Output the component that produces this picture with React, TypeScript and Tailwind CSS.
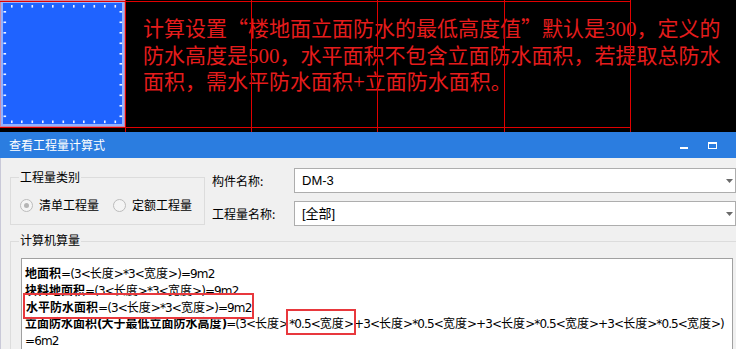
import type { FC, ReactNode } from 'react';

const tickXs = [11, 21, 31.5, 42, 52, 62.5, 73, 83, 93.5, 104, 114.5];
const tickYs = [11, 21.5, 32, 42.5, 53, 63, 73.5, 84, 94.5, 105, 115.5];

const CadBlock: FC = () => (
  <svg width="126" height="128" viewBox="0 0 126 128" className="shrink-0">
    <rect x="0" y="0" width="126" height="128" fill="#c98aa8" />
    <rect x="1" y="1" width="123" height="125" fill="#93b2ff" />
    <rect x="3" y="3" width="119" height="121" fill="#1f63ff" />
    {tickXs.map((x) => (
      <g key={`h${x}`} fill="#f2f5ff">
        <rect x={x} y="5" width="1.6" height="2.6" />
        <rect x={x} y="120.5" width="1.6" height="2.6" />
      </g>
    ))}
    {tickYs.map((y) => (
      <g key={`v${y}`} fill="#f2f5ff">
        <rect x="3.5" y={y} width="2.6" height="1.6" />
        <rect x="119.5" y={y} width="2.6" height="1.6" />
      </g>
    ))}
  </svg>
);

const GridLines: FC = () => (
  <svg width="736" height="132" className="pointer-events-none absolute inset-0">
    <g stroke="#e00000" strokeWidth="1">
      <line x1="0" y1="1.5" x2="631" y2="1.5" />
      <line x1="0" y1="127.5" x2="631" y2="127.5" />
      <line x1="125.5" y1="0" x2="125.5" y2="132" />
      <line x1="251.5" y1="0" x2="251.5" y2="132" />
      <line x1="377.5" y1="0" x2="377.5" y2="132" />
      <line x1="504.5" y1="0" x2="504.5" y2="132" />
      <line x1="630.5" y1="0" x2="630.5" y2="132" />
    </g>
  </svg>
);

const Radio: FC<{ checked?: boolean; label: string }> = ({ checked, label }) => (
  <div className="flex items-center">
    <span className="flex h-[13px] w-[13px] items-center justify-center rounded-full border border-[#bcbcbc] bg-[#f4f4f4]">
      {checked && <span className="h-[5px] w-[5px] rounded-full bg-[#b5b5b5]" />}
    </span>
    <span className="ml-[6px] leading-[16px]">{label}</span>
  </div>
);

const Combo: FC<{ label: string; value: string }> = ({ label, value }) => (
  <div className="flex items-center">
    <span className="w-[82px] leading-[16px]">{label}</span>
    <div className="flex h-[25px] w-[442px] items-center justify-between border border-[#adadad] bg-white pl-[7px] pr-[2px]">
      <span className="font-['Liberation_Sans','Noto_Sans_CJK_SC',sans-serif] text-[13px]">{value}</span>
      <svg width="7" height="4" viewBox="0 0 7 4">
        <path d="M0 0 L7 0 L3.5 4 Z" fill="#6a6a6a" />
      </svg>
    </div>
  </div>
);

// latin runs are set a bit tighter so the formula widths match the dialog font
const Txt: FC<{ s: string }> = ({ s }) => (
  <>
    {s.split(/([\u4e00-\u9fff]+)/).map((part, i) =>
      /[\u4e00-\u9fff]/.test(part) ? (
        <span key={i}>{part}</span>
      ) : (
        <span key={i} className="tracking-[-0.9px]">
          {part}
        </span>
      ),
    )}
  </>
);

const Marked: FC<{ children: ReactNode }> = ({ children }) => (
  <span className="px-[1px] pt-[6px] pb-[2px] outline-2 outline-[#e8383d]">{children}</span>
);

const term = '+3<长度>*0.5<宽度>';

export default function App() {
  return (
    <div className="flex h-[349px] w-[736px] flex-col overflow-hidden bg-black font-['Noto_Sans_CJK_SC',sans-serif]">
      <div className="relative flex h-[132px] shrink-0 items-start">
        <CadBlock />
        <div className="pl-[17px] pt-[14px] font-['Liberation_Serif','Noto_Sans_CJK_SC',serif] text-[21px] leading-[26.5px] whitespace-nowrap text-[#e51c1c]">
          <div>
            计算设置<span className="font-['Noto_Sans_CJK_SC']">“</span>楼地面立面防水的最低高度值
            <span className="font-['Noto_Sans_CJK_SC']">”</span>默认是300，定义的
          </div>
          <div>防水高度是500，水平面积不包含立面防水面积，若提取总防水</div>
          <div>面积，需水平防水面积+立面防水面积。</div>
        </div>
        <GridLines />
      </div>

      <div className="flex h-[26px] shrink-0 items-start bg-[#2b7de0] text-white">
        <span className="ml-[9px] mt-[5px] text-[12px] leading-[16px]">查看工程量计算式</span>
        <div className="ml-auto flex items-start pr-[19px]">
          <div className="mt-[15px] h-[2px] w-[8px] bg-white" />
          <div className="ml-[20px] mt-[10px] h-[7px] w-[9px] border border-t-2 border-white" />
        </div>
      </div>

      <div className="flex-1 border-l border-[#c9c9d8] bg-[#f0f0f0] text-[12px] text-black">
        <div className="flex items-start">
          <div className="relative ml-[9px] mt-[19px] h-[48px] w-[200px] border border-[#dcdcdc]">
            <span className="absolute left-[8px] top-[-9px] bg-[#f0f0f0] px-[1px] leading-[16px]">工程量类别</span>
            <div className="flex items-center pl-[9px] pt-[19px]">
              <Radio checked label="清单工程量" />
              <div className="ml-[14px]">
                <Radio label="定额工程量" />
              </div>
            </div>
          </div>
          <div className="ml-[7px] flex flex-col gap-[8px] pt-[10px]">
            <Combo label="构件名称:" value="DM-3" />
            <Combo label="工程量名称:" value="[全部]" />
          </div>
        </div>

        <div className="relative ml-[9px] mt-[15px] h-[120px] w-[740px] border border-[#dcdcdc]">
          <span className="absolute left-[8px] top-[-10px] bg-[#f0f0f0] px-[1px] leading-[16px]">计算机算量</span>
          <div className="ml-[10px] mt-[16px] h-[100px] w-[712px] border border-[#a0a0a0] bg-white pl-[3px] pt-[7px] font-['DejaVu_Sans','Noto_Sans_CJK_SC',sans-serif] text-[12px] leading-[16.75px] whitespace-nowrap">
            <div>
              <b>地面积</b>
              <Txt s="=(3<长度>*3<宽度>)=9m2" />
            </div>
            <div>
              <b>块料地面积</b>
              <Txt s="=(3<长度>*3<宽度>)=9m2" />
            </div>
            <div>
              <Marked>
                <b>水平防水面积</b>
                <Txt s="=(3<长度>*3<宽度>)=9m2" />
              </Marked>
            </div>
            <div>
              <b>
                <Txt s="立面防水面积(大于最低立面防水高度)" />
              </b>
              <Txt s="=(3<长度>" />
              <Marked>
                <Txt s="*0.5<宽度>" />
              </Marked>
              <Txt s={`${term}${term}${term})`} />
            </div>
            <div>
              <Txt s="=6m2" />
            </div>
          </div>
        </div>
      </div>
    </div>
  );
}
